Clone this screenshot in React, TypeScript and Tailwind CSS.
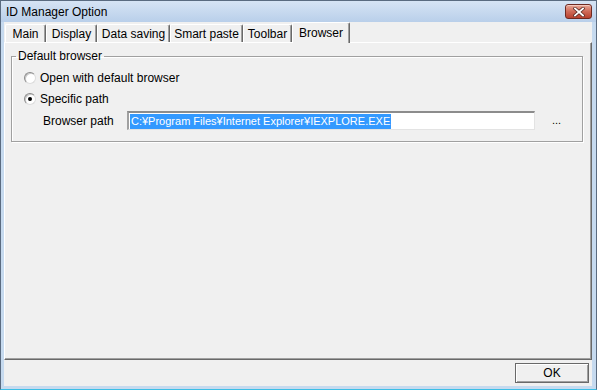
const tabs = [
  { label: "Main", w: "w-[41px]" },
  { label: "Display", w: "w-[51px]" },
  { label: "Data saving", w: "w-[73px]" },
  { label: "Smart paste", w: "w-[73px]" },
  { label: "Toolbar", w: "w-[49px]" },
];

function Radio({ checked }: { checked?: boolean }) {
  return (
    <span className="w-[12px] h-[12px] shrink-0 rounded-full bg-white border border-t-[#8a8a8a] border-l-[#8a8a8a] border-b-[#dcdcdc] border-r-[#dcdcdc] shadow-[inset_1px_1px_0_#c8c8c8] flex items-center justify-center">
      {checked && <span className="w-[4px] h-[4px] rounded-full bg-black" />}
    </span>
  );
}

function CloseButton() {
  return (
    <div className="w-[27px] h-[15px] rounded-[3px] border border-[#6e2a22] bg-gradient-to-b from-[#e8a898] via-[#cf6a58] to-[#b8402e] shadow-[inset_0_1px_0_#f4c8bc] flex items-center justify-center">
      <svg width="12" height="10" viewBox="0 0 12 10">
        <path d="M2 1.5 L10 8.5 M10 1.5 L2 8.5" stroke="#5a2a24" strokeWidth="3.4" strokeLinecap="square" />
        <path d="M2 1.5 L10 8.5 M10 1.5 L2 8.5" stroke="#ffffff" strokeWidth="1.8" strokeLinecap="square" />
      </svg>
    </div>
  );
}

export default function App() {
  return (
    <div className="w-[597px] h-[390px] flex flex-col bg-[#c6daef] border border-[#5a6b80] border-b-[#3cbfe6] font-['Liberation_Sans',sans-serif] text-[12px] text-black overflow-hidden">
      {/* title bar */}
      <div className="h-[21px] shrink-0 flex items-center justify-between pl-[5px] pr-[4px] bg-gradient-to-b from-[#d6e4f4] to-[#b9cfea]">
        <span className="leading-none pt-[1px]">ID Manager Option</span>
        <CloseButton />
      </div>

      {/* client */}
      <div className="flex-1 flex flex-col ml-[3px] mr-[4px] mb-[3px] bg-[#f0f0f0]">
        <div className="h-[20px] shrink-0 flex items-end pl-[1px]">
          {tabs.map((t) => (
            <div
              key={t.label}
              className={`${t.w} h-[18px] flex items-center justify-center pt-[1px] border-t border-l border-white border-r border-r-[#696969] shadow-[inset_-1px_0_0_#a0a0a0] rounded-t-[2px]`}
            >
              {t.label}
            </div>
          ))}
          <div className="w-[58px] h-[21px] -mb-px z-10 flex items-center justify-center pb-[1px] bg-[#f0f0f0] border-t border-l border-white border-r border-r-[#696969] shadow-[inset_-1px_0_0_#a0a0a0] rounded-t-[2px]">
            Browser
          </div>
        </div>

        {/* tab panel */}
        <div className="flex-1 border-t border-l border-white border-r border-b border-r-[#696969] border-b-[#696969] shadow-[inset_-1px_-1px_0_#a0a0a0] pt-[6px] pl-[6px] pr-[8px]">
          <fieldset className="border border-[#a0a0a0] shadow-[inset_1px_1px_0_#ffffff,1px_1px_0_#ffffff] pb-[11px]">
            <legend className="ml-[4px] px-[2px] leading-[14px]">Default browser</legend>
            <div className="mt-[7px] pl-[12px] h-[16px] flex items-center gap-[4px]">
              <Radio />
              <span>Open with default browser</span>
            </div>
            <div className="mt-[5px] pl-[12px] h-[16px] flex items-center gap-[4px]">
              <Radio checked />
              <span>Specific path</span>
            </div>
            <div className="mt-[4px] h-[19px] flex items-center pl-[31px]">
              <span className="w-[84px] shrink-0">Browser path</span>
              <div className="w-[408px] h-[19px] shrink-0 bg-white border-t-2 border-l-2 border-t-[#8c8c8c] border-l-[#a0a0a0] border-r border-b border-r-[#e3e3e3] border-b-[#e3e3e3] flex items-center pl-[1px]">
                <span className="bg-[#3399ff] text-white text-[11px] leading-[15px] px-[1px]">
                  C:¥Program Files¥Internet Explorer¥IEXPLORE.EXE
                </span>
              </div>
              <span className="ml-[17px] text-[11px] leading-none">...</span>
            </div>
          </fieldset>
        </div>

        {/* footer */}
        <div className="h-[26px] shrink-0 flex justify-end items-start pt-[3px] pr-[3px]">
          <button className="w-[74px] h-[20px] bg-[#f0f0f0] border border-[#696969] shadow-[inset_1px_1px_0_#ffffff,inset_-1px_-1px_0_#a0a0a0] flex items-center justify-center">
            OK
          </button>
        </div>
      </div>
    </div>
  );
}
